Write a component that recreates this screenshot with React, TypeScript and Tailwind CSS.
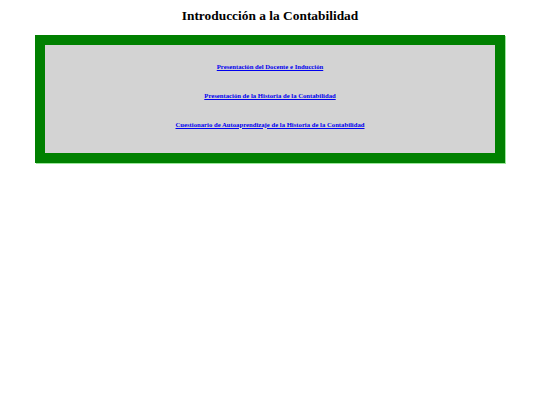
import React from 'react';

const links = [
  'Presentación del Docente e Inducción',
  'Presentación de la Historia de la Contabilidad',
  'Cuestionario de Autoaprendizaje de la Historia de la Contabilidad',
];

const App: React.FC = () => {
  return (
    <div
      className="min-h-screen bg-white pt-[8px]"
      style={{ fontFamily: '"Liberation Serif", "Times New Roman", serif' }}
    >
      <h1 className="text-center text-[13.4px] leading-[16px] font-bold text-black">
        Introducción a la Contabilidad
      </h1>
      <div className="mx-[35px] mt-[11px] border-[10px] border-[#008000] shadow-[1px_1px_0_#9be89b]">
        <div className="flex flex-col items-center bg-[#d3d3d3] pt-[6.5px] pb-[14.5px]">
          {links.map((label) => (
            <a
              key={label}
              href="#"
              className="text-[6.7px] leading-[29px] font-bold text-[#0000ee] underline"
            >
              {label}
            </a>
          ))}
        </div>
      </div>
    </div>
  );
};

export default App;
